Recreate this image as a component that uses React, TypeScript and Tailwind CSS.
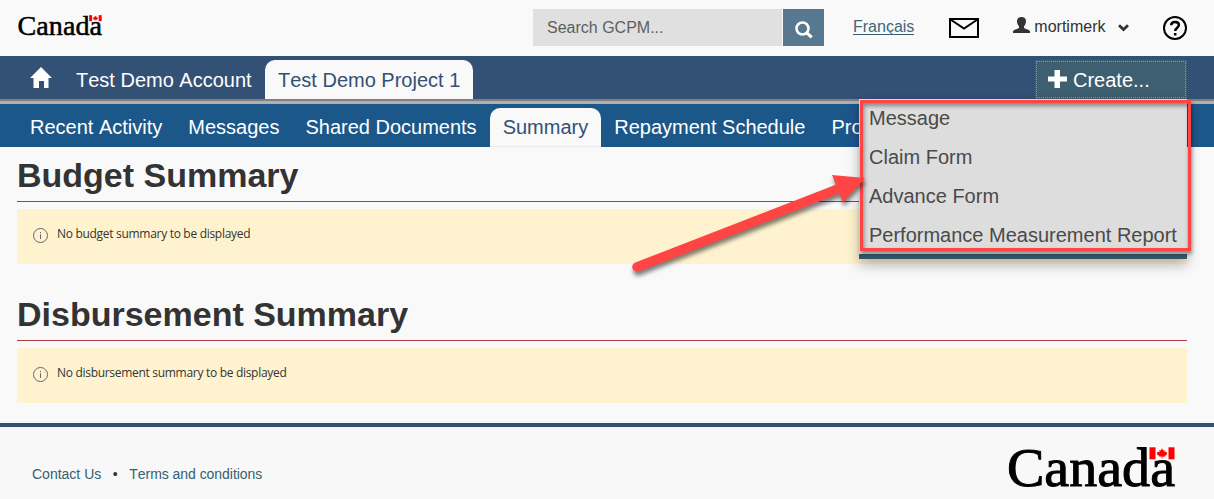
import React from "react";

function Wordmark({ className }: { className: string }) {
  return (
    <svg className={`overflow-visible ${className}`} viewBox="0 0 167 41" role="img" aria-label="Canada">
      <text
        x="-1"
        y="39"
        fontFamily="'Liberation Serif', serif"
        fontSize="55.5"
        textLength="168"
        lengthAdjust="spacingAndGlyphs"
        fill="#000"
        stroke="#000"
        strokeWidth="1"
      >
        Canada
      </text>
      <rect x="140.5" y="-1" width="27" height="14" fill="#f9f9f9" />
      <rect x="141.5" y="0.300" width="6" height="12" fill="#f00" />
      <rect x="160.5" y="0.300" width="6" height="12" fill="#f00" />
      <path
        d="M154 1.300L155.200 3.500 156.700 2.900 156.300 5.300 157.700 4.400 158.100 5.300 159.300 5.300 158.700 6.700 159.200 7.200 156.700 9 156.700 9.800 154.400 9.500 154.400 11.500H153.600L153.600 9.500 151.300 9.800 151.300 9 148.800 7.200 149.300 6.700 148.700 5.300 149.900 5.300 150.300 4.400 151.700 5.300 151.300 2.900 152.800 3.500z"
        fill="#f00"
      />
    </svg>
  );
}

const sections = ["Recent Activity", "Messages", "Shared Documents", "Summary", "Repayment Schedule", "Pro"];
const createItems = ["Message", "Claim Form", "Advance Form", "Performance Measurement Report"];

function Header() {
  return (
    <header className="flex h-14 items-start">
      <Wordmark className="mt-[14.5px] ml-[17.5px] h-[20.6px] w-[84px]" />
      <div className="mt-[9px] ml-[431.5px] flex h-[37px] gap-px">
        <div className="flex w-[249px] items-center bg-[#e0e0e0] pl-3.5 text-[#5e5e5e]">Search GCPM...</div>
        <button className="flex w-[41px] items-center justify-center bg-[#57788f] pt-1">
          <svg width="18" height="18" viewBox="0 0 18 18" fill="none" stroke="#fff">
            <circle cx="7.5" cy="7.5" r="6" strokeWidth="2.6" />
            <path d="M11.8 11.8l4.900 4.600" strokeWidth="3.200" />
          </svg>
        </button>
      </div>
      <a className="mt-[17px] ml-[29px] h-[18px] border-b border-[#335f72] leading-[19px] text-[#426778]">Français</a>
      <svg className="mt-[18px] ml-[35px] h-5 w-[30px]" viewBox="0 0 30 20" fill="none" stroke="#000" strokeWidth="2">
        <rect x="1" y="1" width="28" height="18" />
        <path d="M1.500 1.500L15 10.500 28.500 1.500" />
      </svg>
      <svg className="mt-[17px] ml-[34px] h-4 w-[17px]" viewBox="0 0 17 16" fill="#333">
        <path d="M8.500 0C5.800 0 4 1.500 4 4c0 2.200.8 4.200 2 5.300v1.200c0 .5-.3.800-.8 1L1.200 13C.4 13.400 0 13.800 0 14.500V16h17v-1.500c0-.7-.4-1.100-1.200-1.500L11.800 11.500c-.5-.2-.8-.5-.8-1V9.300c1.200-1.100 2-3.100 2-5.300 0-2.500-1.800-4-4.500-4z" />
      </svg>
      <span className="mt-[17px] ml-[4px] w-[72px] leading-[19px] text-[#333]">mortimerk</span>
      <svg className="mt-[24px] ml-[12px] h-2 w-[11px]" viewBox="0 0 11 8" fill="none" stroke="#333" strokeWidth="2.800">
        <path d="M1 1.300l4.500 4.200L10 1.300" />
      </svg>
      <svg className="mt-[16px] ml-[34px] size-6" viewBox="0 0 24 24" fill="none" stroke="#000">
        <circle cx="12" cy="12" r="11" strokeWidth="2" />
        <path d="M8.200 9.300c0-2.200 1.500-3.300 3.800-3.300s3.900 1.100 3.900 3c0 2.700-3.700 2.700-3.700 6" strokeWidth="2.500" />
        <path d="M12.200 17v2.500" strokeWidth="2.500" />
      </svg>
    </header>
  );
}

function CreateMenu() {
  return (
    <div className="relative mt-1 mr-[27px] h-[39px] w-[152px]">
      <button className="flex h-full w-full items-center bg-[#3d5f70] pl-[13px] text-white outline-1 -outline-offset-2 outline-dotted outline-[#8a9a8d]">
        <svg className="-mt-0.5" width="19" height="18" viewBox="0 0 19 18" fill="#fff">
          <path d="M6.500 0h5.500v6.500h7v5h-7V18H6.500v-6.500H0v-5h6.500z" />
        </svg>
        <span className="ml-1.5">Create...</span>
      </button>
      <ul className="absolute top-[39px] right-0 z-10 h-[160px] w-[328px] border-b-[5px] border-[#34566a] bg-[#ddd] text-[#4a4a4a] shadow-[0_6px_12px_rgba(0,0,0,0.28)]">
        {createItems.map((item) => (
          <li key={item} className="h-[39px] pl-2.5 leading-[39px] whitespace-nowrap">
            {item}
          </li>
        ))}
      </ul>
      <div className="absolute top-[40px] -right-[4px] z-20 h-[151px] w-[331px] border-[3px] border-[#ff4444] shadow-[1px_3px_4px_rgba(0,0,0,0.4),inset_1px_3px_4px_rgba(0,0,0,0.4)]" />
      <svg
        className="absolute top-[106px] right-[317px] z-20 h-[120px] w-[250px] overflow-visible drop-shadow-[1px_4px_2px_rgba(0,0,0,0.5)]"
        viewBox="620 166 250 120"
        fill="#ff4444"
      >
        <path d="M637 267L838 189" stroke="#ff4444" strokeWidth="9.500" strokeLinecap="round" />
        <path d="M832 175l33 3-22 24.500z" />
      </svg>
    </div>
  );
}

function Panel({ title, message, className }: { title: string; message: string; className: string }) {
  return (
    <section className={className}>
      <h1 className="h-[55px] border-b border-[#af3c43] pt-[9px] text-[34px] leading-[38px] font-bold text-[#333]">{title}</h1>
      <div className="mt-[7px] flex h-[55px] bg-[#fff3cf]">
        <svg className="mt-[19px] ml-4 size-[15px]" viewBox="0 0 15 15" fill="none" stroke="#666">
          <circle cx="7.500" cy="7.500" r="7" />
          <path d="M7.500 6.300V11M7.500 4v1.200" />
        </svg>
        <p className="mt-4 ml-[9px] font-['Open_Sans',sans-serif] text-[12px] leading-[18px] tracking-[-0.3px] text-[#333]">
          {message}
        </p>
      </div>
    </section>
  );
}

export default function App() {
  return (
    <div className="flex h-[499px] w-[1214px] flex-col overflow-hidden bg-[#f9f9f9] font-['Liberation_Sans',Arial,sans-serif] text-base [font-kerning:none]">
      <Header />
      <nav className="flex h-[43px] shrink-0 bg-[#335075] text-xl text-white">
        <svg className="mt-[11px] ml-[30px] h-[21px] w-[22px]" viewBox="0 0 22 21" fill="#fff">
          <path d="M11 0l11 11h-3.500v10H14v-7H9v7H3.500V11H0z" />
        </svg>
        <span className="mt-1 ml-[11px] w-[202px] px-[13px] leading-10 whitespace-nowrap">Test Demo Account</span>
        <span className="mt-1 h-[39px] w-[208px] rounded-t-[10px] bg-[#f9f9f9] px-[13px] leading-10 whitespace-nowrap text-[#335075]">
          Test Demo Project 1
        </span>
        <div className="ml-auto">
          <CreateMenu />
        </div>
      </nav>
      <div className="h-[5px] shrink-0 border-t-2 border-[#808080] bg-[#b0b0b0]" />
      <nav className="flex h-[43px] shrink-0 bg-[#1c578a] pt-1 pl-[17px] text-xl leading-[38px] text-white">
        {sections.map((name) => (
          <span
            key={name}
            className={
              name === "Summary"
                ? "rounded-t-[10px] border-b border-[#e8ecf2] bg-[#f9f9f9] px-[13px] whitespace-nowrap text-[#335075]"
                : "px-[13px] whitespace-nowrap"
            }
          >
            {name}
          </span>
        ))}
      </nav>
      <main className="h-[276px] shrink-0 px-[17px]">
        <Panel className="w-[1170px]" title="Budget Summary" message="No budget summary to be displayed" />
        <Panel className="mt-[22px] w-[1170px]" title="Disbursement Summary" message="No disbursement summary to be displayed" />
      </main>
      <footer className="flex h-[76px] shrink-0 border-t-4 border-[#335075] bg-[#f8f8f8] pl-8 text-sm text-[#335f72]">
        <span className="mt-[37px] leading-5">Contact Us</span>
        <span className="mt-[37px] w-7 text-center leading-5 text-[#333]">•</span>
        <span className="mt-[37px] leading-5 tracking-[-0.04px]">Terms and conditions</span>
        <Wordmark className="mt-5 mr-[39px] ml-auto h-[41px] w-[167px]" />
      </footer>
    </div>
  );
}
